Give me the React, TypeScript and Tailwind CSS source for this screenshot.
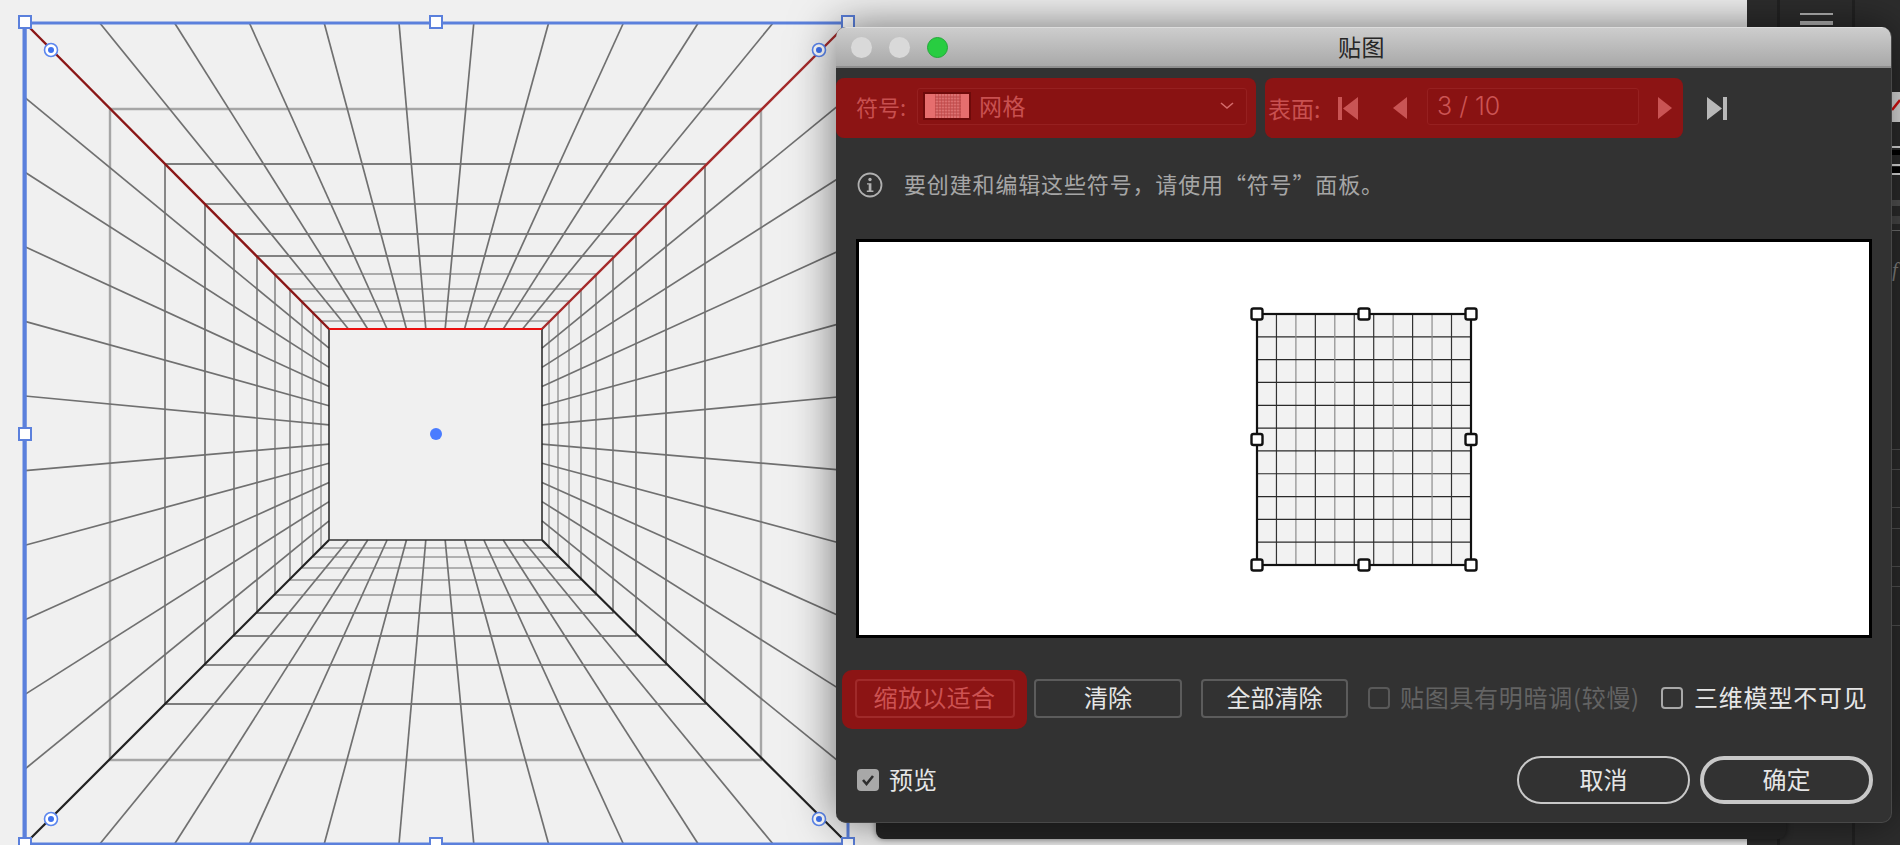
import React from 'react';

const topY = [109, 164, 204, 234, 256, 274, 289, 301, 312, 321];
const bottomY = [760, 704, 665, 636, 613, 595, 580, 568, 557, 548];
const leftX = [110, 165, 205, 234, 257, 275, 290, 302, 313, 321];
const rightX = [761, 705, 666, 636, 613, 596, 581, 569, 558, 549];
const ringStyle = [
    { stroke: '#a6a6a6', width: 2.4 },
    { stroke: '#7c7c7c', width: 1.8 },
    { stroke: '#666666', width: 1.6 },
    { stroke: '#5c5c5c', width: 1.4 },
    { stroke: '#5c5c5c', width: 1.3 },
    { stroke: '#666666', width: 1.2 },
    { stroke: '#666666', width: 1.2 },
    { stroke: '#707070', width: 1 },
    { stroke: '#707070', width: 1 },
    { stroke: '#707070', width: 1 },
];
const steps = Array.from({ length: 10 }, (_, i) => i + 1);
const grayColumns = [2, 4, 7, 9];

// Perspective room drawn on the artboard
const PerspectiveGrid = () => (
    <svg width="1747" height="845" className="block">
        {ringStyle.map((r, i) => (
            <g key={i} stroke={r.stroke} strokeWidth={r.width} fill="none">
                <path d={`M${leftX[i]} ${topY[i]}H${rightX[i]}V${bottomY[i]}H${leftX[i]}Z`} />
            </g>
        ))}
        <g stroke="#707070" strokeWidth="1.7">
            {steps.map((k) => (
                <React.Fragment key={k}>
                    <line x1={25 + k * 74.8} y1={23} x2={329 + k * 19.36} y2={329} />
                    <line x1={25 + k * 74.8} y1={844} x2={329 + k * 19.36} y2={540} />
                    <line x1={25} y1={23 + k * 74.6} x2={329} y2={329 + k * 19.18} />
                    <line x1={848} y1={23 + k * 74.6} x2={542} y2={329 + k * 19.18} />
                </React.Fragment>
            ))}
        </g>
        <line x1="25" y1="23" x2="329" y2="329" stroke="#8a1616" strokeWidth="2.4" />
        <line x1="848" y1="23" x2="542" y2="329" stroke="#a42a2a" strokeWidth="2.4" />
        <line x1="25" y1="844" x2="329" y2="540" stroke="#222222" strokeWidth="2.2" />
        <line x1="848" y1="844" x2="542" y2="540" stroke="#222222" strokeWidth="2.2" />
        <path d="M329 329V540M542 329V540" stroke="#222222" strokeWidth="1.5" fill="none" />
        <path d="M329 540H542" stroke="#333333" strokeWidth="1.5" fill="none" />
        <path d="M329 329H542" stroke="#ea1010" strokeWidth="2.2" fill="none" />
        <rect x="25" y="23" width="823" height="821" fill="none" stroke="#5b80dc" strokeWidth="3" />
        <line x1="24.5" y1="23" x2="24.5" y2="844" stroke="#5b80dc" strokeWidth="4" />
        {[
            [25, 22], [436, 22], [848, 22], [25, 434], [25, 844], [436, 844], [848, 844],
        ].map(([x, y]) => (
            <rect key={`${x}-${y}`} x={x - 6} y={y - 6} width="12" height="12" fill="#ffffff" stroke="#5b80dc" strokeWidth="2" />
        ))}
        {[
            [51, 50], [819, 50], [51, 819], [819, 819],
        ].map(([x, y]) => (
            <g key={`${x}-${y}`}>
                <circle cx={x} cy={y} r="6.5" fill="#ffffff" stroke="#5b86ee" strokeWidth="1.6" />
                <circle cx={x} cy={y} r="3" fill="#3f72ee" />
            </g>
        ))}
        <circle cx="436" cy="434" r="6" fill="#4a7cff" />
    </svg>
);

const PreviewGrid = () => {
    const cells = Array.from({ length: 12 }, (_, i) => i);
    const handles = [12, 119, 226].flatMap((x) =>
        [12, 137.5, 263].filter((y) => !(x === 119 && y === 137.5)).map((y) => [x, y])
    );
    return (
        <svg width="238" height="275" className="block mt-[2px]">
            <rect x="12" y="12" width="214" height="251" fill="#f2f2f2" />
            {cells.map((i) => (
                <g key={i}>
                    <line x1={12 + i * 19.45} y1="12" x2={12 + i * 19.45} y2="263" stroke={grayColumns.includes(i) ? '#8c8c8c' : '#333333'} strokeWidth="1.2" />
                    <line x1="12" y1={12 + i * 22.82} x2="226" y2={12 + i * 22.82} stroke="#2a2a2a" strokeWidth="1.2" />
                </g>
            ))}
            <rect x="12" y="12" width="214" height="251" fill="none" stroke="#111111" strokeWidth="2.2" />
            {handles.map(([x, y]) => (
                <rect key={`${x}-${y}`} x={x - 5.5} y={y - 5.5} width="11" height="11" rx="2" fill="#ffffff" stroke="#111111" strokeWidth="2.4" />
            ))}
        </svg>
    );
};

const SymbolSwatch = () => (
    <svg width="48" height="28" className="block shrink-0">
        <rect x="1" y="1" width="46" height="26" fill="#e66e6e" stroke="#6e0a0a" strokeWidth="2" />
        <rect x="12" y="2" width="26" height="24" fill="#cf5656" />
        {[14, 17, 20, 23, 26, 29, 32, 35].map((x) => (
            <line key={x} x1={x} y1="2" x2={x} y2="26" stroke="#e88a8a" strokeWidth="1" />
        ))}
        {[5, 8, 11, 14, 17, 20, 23].map((y) => (
            <line key={y} x1="12" y1={y} x2="38" y2={y} stroke="#b84848" strokeWidth="1" />
        ))}
    </svg>
);

const RedField = ({ className, children }: { className: string; children?: React.ReactNode }) => (
    <div className={`flex items-center h-[37px] rounded-[3px] border border-[#962020] bg-[#891212] ${className}`}>
        {children}
    </div>
);

const Checkbox = ({ className }: { className: string }) => (
    <span className={`block w-[22px] h-[22px] shrink-0 rounded-[4px] border-2 mb-[4px] ${className}`}></span>
);

const RightPanel = () => (
    <div className="flex w-[153px] h-full bg-[#2d2d2d]">
        <div className="w-[33px] h-full border-r-[3px] border-[#222222]"></div>
        <div className="w-[75px] h-full border-r-[3px] border-[#222222] flex flex-col items-center pt-[13px]">
            <div className="w-[33px] h-[2px] bg-[#b4b4b4]"></div>
            <div className="w-[33px] h-[4px] bg-[#b4b4b4] mt-[6px]"></div>
        </div>
        <div className="flex-1 flex flex-col items-end">
            <div className="w-[8px] mt-[92px] h-[30px] bg-[#e6e6e6] overflow-hidden">
                <svg width="8" height="30" className="block">
                    <line x1="0" y1="18" x2="8" y2="8" stroke="#e01010" strokeWidth="2.5" />
                </svg>
            </div>
            <div className="w-[8px] mt-[24px] h-[2px] bg-[#e6e6e6]"></div>
            <div className="w-[8px] mt-[2px] h-[5px] bg-black"></div>
            <div className="w-[8px] mt-[9px] h-[2px] bg-[#e6e6e6]"></div>
            <div className="w-[8px] mt-[1px] h-[6px] bg-black"></div>
            <div className="w-[8px] h-[2px] bg-[#e6e6e6]"></div>
            <div className="w-[8px] mt-[25px] h-[6px] bg-[#555555]"></div>
            <div className="w-[8px] mt-[10px] h-[8px] bg-[#4a4a4a]"></div>
            <div className="w-[8px] mt-[6px] h-[1px] bg-[#777777]"></div>
            <div className="w-[8px] mt-[28px] h-[22px] text-[20px] leading-[22px] italic text-[#888888] overflow-hidden font-['Liberation_Serif',serif]">f</div>
            {[449, 469, 507, 528, 566, 586, 625].map((y, i, all) => (
                <div key={y} className="w-[8px] h-[1px] bg-[#555555]" style={{ marginTop: i === 0 ? 168 : y - all[i - 1] - 1 }}></div>
            ))}
        </div>
    </div>
);

export default function App() {
    return (
        <div className="relative flex w-[1900px] h-[845px] overflow-hidden bg-[#f0f0f0] font-['Noto_Sans_CJK_SC','Noto_Sans',sans-serif]">
            <div className="w-[1747px] h-full shrink-0">
                <PerspectiveGrid />
            </div>
            <RightPanel />

            {/* Panel oscuro detrás del diálogo */}
            <div className="absolute left-[876px] top-[40px] w-[910px] h-[799px] rounded-b-[8px] bg-[#262626] shadow-[0_0_6px_rgba(0,0,0,0.5)]"></div>

            {/* Diálogo */}
            <div className="absolute left-[836px] top-[27px] w-[1056px] h-[796px] rounded-[10px] overflow-hidden flex flex-col bg-[#323232] shadow-[0_0_46px_rgba(0,0,0,0.55)] border-b border-r border-[#484848]">
                <div className="relative flex items-center justify-center h-[41px] shrink-0 bg-gradient-to-b from-[#cdcdcd] to-[#a9a9a9] border-t border-[#dddddd] border-b-2 border-b-[#8e8e8e]">
                    <div className="absolute left-[15px] top-[9px] flex gap-[17px]">
                        <span className="w-[21px] h-[21px] rounded-full bg-[#d9d9d9]"></span>
                        <span className="w-[21px] h-[21px] rounded-full bg-[#d9d9d9]"></span>
                        <span className="w-[21px] h-[21px] rounded-full bg-[#28cd41] border border-[#22a838]"></span>
                    </div>
                    <span className="text-[23px] leading-none text-[#262626] tracking-[0.5px] -ml-[4px] pb-[2px]">贴图</span>
                </div>

                {/* Fila de símbolo y superficie */}
                <div className="flex items-center mt-[10px] h-[60px] shrink-0">
                    <div className="flex items-center w-[420px] h-full rounded-[8px] bg-[#8c1414] pl-[20px] text-[#c85050]">
                        <span className="w-[61px] text-[22px] leading-none shrink-0 pb-[5px] whitespace-nowrap">符号:</span>
                        <RedField className="w-[330px] pl-[5px] pr-[12px] mb-[4px]">
                            <SymbolSwatch />
                            <span className="ml-[8px] text-[23px] leading-none tracking-[0.5px] pb-[2px]">网格</span>
                            <svg width="14" height="8" viewBox="0 0 14 8" className="ml-auto">
                                <path d="M1 1l6 5 6-5" fill="none" stroke="#d46a6a" strokeWidth="1.6" />
                            </svg>
                        </RedField>
                    </div>
                    <div className="flex items-center w-[418px] h-full ml-[9px] rounded-[8px] bg-[#8c1414] pl-[3px] text-[#c85050]">
                        <span className="w-[70px] text-[23px] leading-none shrink-0 whitespace-nowrap">表面:</span>
                        <svg width="20" height="23" viewBox="0 0 20 23" className="shrink-0">
                            <path d="M0 0h4v23H0zM20 0v23L5 11.5z" fill="#c95454" />
                        </svg>
                        <svg width="14" height="22" viewBox="0 0 14 22" className="ml-[35px] shrink-0">
                            <path d="M14 0v22L0 11z" fill="#c95454" />
                        </svg>
                        <RedField className="w-[212px] ml-[20px] pl-[9px] mb-[4px]">
                            <span className="text-[25px] leading-none font-['Inter',sans-serif] font-light text-[#cc5454]">3 / 10</span>
                        </RedField>
                        <svg width="14" height="22" viewBox="0 0 14 22" className="ml-[19px] shrink-0">
                            <path d="M0 0v22l14-11z" fill="#c95454" />
                        </svg>
                    </div>
                    <svg width="20" height="23" viewBox="0 0 20 23" className="ml-[24px] shrink-0">
                        <path d="M0 0v23l15-11.500zM16 0h4v23h-4z" fill="#b8b8b8" />
                    </svg>
                </div>

                {/* Aviso */}
                <div className="flex items-center mt-[34px] ml-[21px] h-[26px] shrink-0">
                    <svg width="26" height="26" viewBox="0 0 26 26" className="shrink-0">
                        <circle cx="13" cy="13" r="11.5" fill="none" stroke="#b0b0b0" strokeWidth="1.8" />
                        <circle cx="13" cy="7.5" r="1.7" fill="#b0b0b0" />
                        <path d="M10 11.2h4.4v7.4H16.400v1.400H9.800v-1.400h1.900v-6H10z" fill="#b0b0b0" />
                    </svg>
                    <span className="ml-[21px] text-[22px] leading-none text-[#a6a6a6] whitespace-nowrap tracking-[0.85px] pb-[4px]">要创建和编辑这些符号，请使用“符号”面板。</span>
                </div>

                {/* Vista previa */}
                <div className="flex items-center justify-center mt-[41px] ml-[20px] w-[1016px] h-[399px] shrink-0 bg-white border-[3px] border-black">
                    <PreviewGrid />
                </div>

                {/* Botones */}
                <div className="flex items-center mt-[32px] h-[59px] shrink-0">
                    <div className="flex items-center justify-center w-[185px] h-full ml-[6px] rounded-[10px] bg-[#8c1414]">
                        <div className="flex items-center justify-center w-[160px] h-[39px] mb-[2px] pb-[3px] rounded-[4px] border-2 border-[#a02a2a] text-[24px] leading-none tracking-[0.4px] text-[#cc5252]">缩放以适合</div>
                    </div>
                    <div className="flex items-center justify-center w-[148px] h-[39px] mb-[2px] pb-[3px] ml-[7px] rounded-[4px] border-2 border-[#5c5c5c] text-[24px] leading-none text-[#e6e6e6]">清除</div>
                    <div className="flex items-center justify-center w-[147px] h-[39px] mb-[2px] pb-[3px] ml-[19px] rounded-[4px] border-2 border-[#5c5c5c] text-[24px] leading-none text-[#e6e6e6]">全部清除</div>
                    <Checkbox className="ml-[20px] border-[#595959]" />
                    <span className="ml-[10px] pb-[5px] text-[24px] leading-none text-[#636363] whitespace-nowrap tracking-[0.7px] w-[261px]">贴图具有明暗调(较慢)</span>
                    <Checkbox className="border-[#a8a8a8]" />
                    <span className="ml-[11px] pb-[5px] text-[24px] leading-none text-[#e6e6e6] whitespace-nowrap tracking-[0.8px]">三维模型不可见</span>
                </div>

                <div className="flex items-center mt-[27px] h-[48px] shrink-0 pl-[21px] pr-[18px]">
                    <span className="flex items-center justify-center w-[22px] h-[22px] rounded-[4px] bg-[#a8a8a8]">
                        <svg width="14" height="12" viewBox="0 0 14 12">
                            <path d="M2 6l3.500 4L12 2" fill="none" stroke="#2e2e2e" strokeWidth="2.600" />
                        </svg>
                    </span>
                    <span className="ml-[10px] pb-[3px] text-[24px] leading-none text-[#e6e6e6]">预览</span>
                    <div className="flex items-center justify-center w-[173px] h-[48px] ml-auto pb-[3px] rounded-full border-2 border-[#c8c8c8] text-[24px] leading-none text-[#e6e6e6]">取消</div>
                    <div className="flex items-center justify-center w-[173px] h-[48px] ml-[10px] pb-[3px] rounded-full border-4 border-[#c8c8c8] text-[24px] leading-none text-[#e6e6e6]">确定</div>
                </div>
            </div>
        </div>
    );
}
